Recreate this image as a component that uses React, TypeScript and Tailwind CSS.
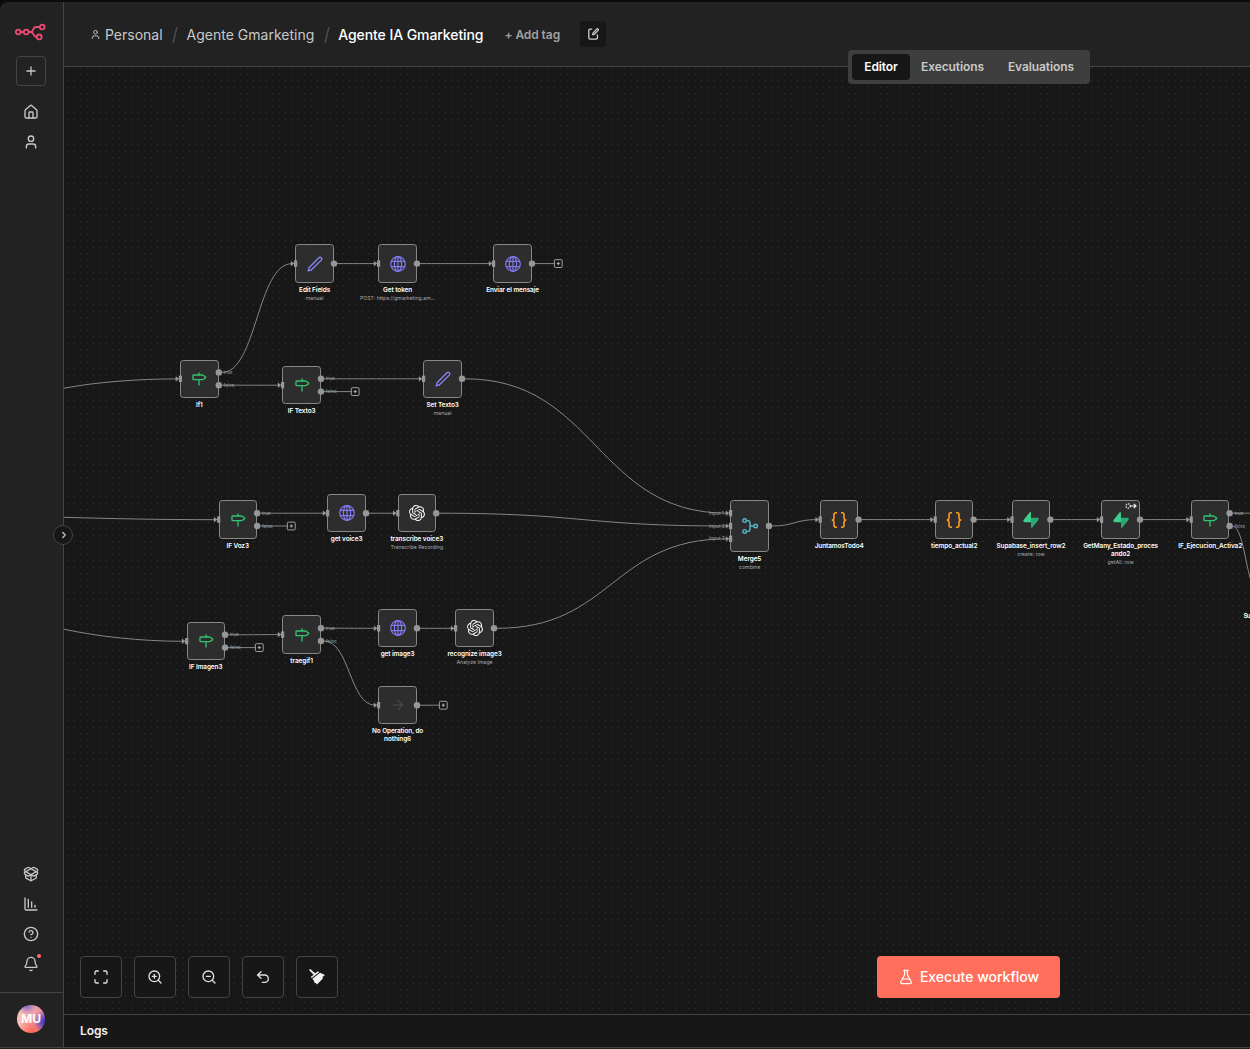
import type { ReactNode } from 'react';
import type { LucideIcon } from 'lucide-react';
import {
  ArrowRight,
  Bell,
  ChartColumnDecreasing,
  ChevronRight,
  CircleQuestionMark,
  FlaskConical,
  House,
  Maximize,
  Milestone,
  PackageOpen,
  Plus,
  Undo2,
  User,
  ZoomIn,
  ZoomOut
} from 'lucide-react';
import { SiOpenai } from 'react-icons/si';

type NodeKind = 'if' | 'edit' | 'http' | 'openai' | 'noop' | 'merge' | 'code' | 'supabase';

type FlowNode = {
  id: string;
  kind: NodeKind;
  x: number;
  y: number;
  lines: string[];
  subtitle?: string;
  retry?: boolean;
};

const SIZE = 38.4;

const nodes: FlowNode[] = [
  { id: 'edit', kind: 'edit', x: 295.4, y: 244.4, lines: ['Edit Fields'], subtitle: 'manual' },
  { id: 'token', kind: 'http', x: 378.4, y: 244.4, lines: ['Get token'], subtitle: 'POST: https://gmarketing.am...' },
  { id: 'enviar', kind: 'http', x: 493.4, y: 244.4, lines: ['Enviar el mensaje'] },
  { id: 'if1', kind: 'if', x: 180.2, y: 359.6, lines: ['If1'] },
  { id: 'texto', kind: 'if', x: 282.4, y: 366, lines: ['IF Texto3'] },
  { id: 'setTexto', kind: 'edit', x: 423.4, y: 359.6, lines: ['Set Texto3'], subtitle: 'manual' },
  { id: 'voz', kind: 'if', x: 218.5, y: 500.4, lines: ['IF Voz3'] },
  { id: 'getVoice', kind: 'http', x: 327.4, y: 494, lines: ['get voice3'] },
  { id: 'transcribe', kind: 'openai', x: 397.6, y: 494, lines: ['transcribe voice3'], subtitle: 'Transcribe Recording' },
  { id: 'imagen', kind: 'if', x: 186.5, y: 622, lines: ['IF Imagen3'] },
  { id: 'traegif', kind: 'if', x: 282.4, y: 615.4, lines: ['traegif1'] },
  { id: 'getImage', kind: 'http', x: 378.4, y: 609.1, lines: ['get image3'] },
  { id: 'recognize', kind: 'openai', x: 455.4, y: 609.1, lines: ['recognize image3'], subtitle: 'Analyze Image' },
  { id: 'noop', kind: 'noop', x: 378.4, y: 686, lines: ['No Operation, do', 'nothing6'] },
  { id: 'merge', kind: 'merge', x: 730.4, y: 500.4, lines: ['Merge5'], subtitle: 'combine' },
  { id: 'juntamos', kind: 'code', x: 820, y: 500.4, lines: ['JuntamosTodo4'] },
  { id: 'tiempo', kind: 'code', x: 935, y: 500.4, lines: ['tiempo_actual2'] },
  { id: 'insert', kind: 'supabase', x: 1011.8, y: 500.4, lines: ['Supabase_insert_row2'], subtitle: 'create: row' },
  {
    id: 'getMany',
    kind: 'supabase',
    x: 1101.4,
    y: 500.4,
    lines: ['GetMany_Estado_proces', 'ando2'],
    subtitle: 'getAll: row',
    retry: true
  },
  { id: 'ejecucion', kind: 'if', x: 1191, y: 500.4, lines: ['IF_Ejecucion_Activa2'] }
];

// [source, output index, target, input index]
const edges: [string, number, string, number][] = [
  ['if1', 0, 'edit', 0],
  ['if1', 1, 'texto', 0],
  ['edit', 0, 'token', 0],
  ['token', 0, 'enviar', 0],
  ['texto', 0, 'setTexto', 0],
  ['setTexto', 0, 'merge', 0],
  ['voz', 0, 'getVoice', 0],
  ['getVoice', 0, 'transcribe', 0],
  ['transcribe', 0, 'merge', 1],
  ['imagen', 0, 'traegif', 0],
  ['traegif', 0, 'getImage', 0],
  ['traegif', 1, 'noop', 0],
  ['getImage', 0, 'recognize', 0],
  ['recognize', 0, 'merge', 2],
  ['merge', 0, 'juntamos', 0],
  ['juntamos', 0, 'tiempo', 0],
  ['tiempo', 0, 'insert', 0],
  ['insert', 0, 'getMany', 0],
  ['getMany', 0, 'ejecucion', 0]
];

// Outputs without a connection end in a "+" button
const openOutputs: [string, number][] = [
  ['enviar', 0],
  ['texto', 1],
  ['voz', 1],
  ['imagen', 1],
  ['noop', 0]
];

// Edges whose other end lies outside the viewport
const loosePaths = [
  'M64 388.2C97 382 138 378.9 177 378.9',
  'M64 517.3C110 518.6 160 519.7 216 519.7',
  'M64 629.2C98 636.5 140 641.3 184 641.3',
  'M1232 513.2H1250',
  'M1232 526C1245.5 526 1246 590 1258 590'
];

const heightOf = (node: FlowNode) => (node.kind === 'merge' ? 51.2 : SIZE);

function outputsOf(node: FlowNode) {
  if (node.kind === 'if') return [node.y + 12.8, node.y + 25.6];
  return [node.y + heightOf(node) / 2];
}

function inputsOf(node: FlowNode) {
  if (node.kind === 'merge') return [node.y + 12.8, node.y + 25.6, node.y + 38.4];
  return [node.y + heightOf(node) / 2];
}

const findNode = (id: string) => nodes.find((node) => node.id === id) as FlowNode;

function edgePath([from, output, to, input]: [string, number, string, number]) {
  const source = findNode(from);
  const target = findNode(to);
  const sx = source.x + SIZE + 3.2;
  const sy = outputsOf(source)[output];
  const tx = target.x - 3.2;
  const ty = inputsOf(target)[input];
  const mid = (sx + tx) / 2;
  return `M${sx} ${sy}C${mid} ${sy} ${mid} ${ty} ${tx} ${ty}`;
}

function LogoIcon() {
  return (
    <svg width="31" height="18" viewBox="0 0 31 18" fill="none" stroke="#ea4b71" strokeWidth="1.8">
      <circle cx="3.2" cy="9" r="2.4" />
      <circle cx="11.2" cy="9" r="2.4" />
      <circle cx="27.2" cy="4" r="2.4" />
      <circle cx="24.2" cy="13.9" r="2.4" />
      <path d="M5.6 9h3.2M13.6 9H15.5c4 0 1.5-5 5.5-5h3.8M15.500 9c4 0 1.900 4.900 6.300 4.900" />
    </svg>
  );
}

function GlobeIcon() {
  return (
    <svg width="16" height="16" viewBox="0 0 16 16" fill="none" stroke="#8379f0" strokeWidth="1.2">
      <circle cx="8" cy="8" r="7.3" />
      <ellipse cx="8" cy="8" rx="3.6" ry="7.3" />
      <path d="M8 .7v14.6M1.3 5.3h13.4M1.3 10.7h13.4" />
    </svg>
  );
}

function PencilIcon() {
  return (
    <svg
      width="16"
      height="16"
      viewBox="0 0 16 16"
      fill="none"
      stroke="#8b87f5"
      strokeWidth="1.3"
      strokeLinejoin="round"
    >
      <path d="M1.2 14.8 2 11.8 11.9 1.7a1.65 1.65 0 0 1 2.4 2.4L4.2 14Z" />
    </svg>
  );
}

function MergeIcon() {
  return (
    <svg width="16" height="16" viewBox="0 0 16 16" fill="none" stroke="#54b8c9" strokeWidth="1.4">
      <circle cx="2.6" cy="2.6" r="1.8" />
      <circle cx="2.6" cy="13.4" r="1.8" />
      <circle cx="13.6" cy="8" r="1.8" />
      <path d="M4.5 2.6h1.3c1.5 0 2.2.8 2.2 2.2v6.4c0 1.4-.7 2.2-2.2 2.2H4.5M8 8h3.7" />
    </svg>
  );
}

function BracesIcon() {
  return (
    <svg width="16" height="16" viewBox="0 0 16 16" fill="none" stroke="#ff9922" strokeWidth="1.6">
      <path d="M6 .8H4.900c-1.300 0-1.900.7-1.900 1.900v3c0 1.300-.7 2.300-2.300 2.300 1.600 0 2.300 1 2.300 2.300v3c0 1.200.6 1.900 1.900 1.900H6M10 .8h1.100c1.300 0 1.900.7 1.900 1.900v3c0 1.300.7 2.300 2.300 2.300-1.600 0-2.300 1-2.300 2.300v3c0 1.200-.6 1.900-1.900 1.900H10" />
    </svg>
  );
}

function SupabaseIcon() {
  return (
    <svg width="16" height="16" viewBox="0 0 109 113" fill="none">
      <path
        d="M63.7 110.3c-2.9 3.6-8.7 1.6-8.7-3L54 40.1h45.2c8.2 0 12.8 9.4 7.7 15.8L63.7 110.3Z"
        fill="#2ca873"
      />
      <path
        d="M45.3 2.1c2.9-3.6 8.7-1.6 8.7 3l.5 67.2H9.8c-8.2 0-12.7-9.5-7.6-15.9L45.3 2.1Z"
        fill="#3ecf8e"
      />
    </svg>
  );
}

function BroomIcon() {
  return (
    <svg width="18" height="18" viewBox="0 0 18 18" fill="#f0f0f0">
      <path d="M1 2.1 2.2.9 7.2 5.2 9.900 3.300l1.300.9L3.600 10 2.700 8.900 5.600 6.800Z" />
      <path d="M12.100 4.700 17 7.100 14.600 9 14.700 10.800 9 16.600 7.700 15 6.200 14.600 6 12.800 4.300 10.700Z" />
    </svg>
  );
}

function NoteIcon() {
  return (
    <svg
      width="11"
      height="12"
      viewBox="0 0 12 13"
      fill="none"
      stroke="#d0d0d0"
      strokeWidth="1.4"
      strokeLinecap="round"
      strokeLinejoin="round"
    >
      <path d="M4 1.2H2.3c-.8 0-1.4.6-1.4 1.4v8c0 .8.6 1.4 1.4 1.4h6.6c.8 0 1.4-.6 1.4-1.4V7.5" />
      <path d="M5 7.2 5.4 5.5 9.5 1.2a1 1 0 0 1 1.5 1.4L6.900 6.800Z" />
    </svg>
  );
}

function RetryIcon() {
  return (
    <svg width="12" height="6" viewBox="0 0 12 6" fill="none" stroke="#f2f2f2" strokeWidth="1.2">
      <circle cx="3.2" cy="3" r="2.2" strokeDasharray="1.4 0.9" />
      <path d="M5.8 3h5M8.8.8 11 3 8.8 5.2" />
    </svg>
  );
}

const nodeIcons: Record<NodeKind, ReactNode> = {
  if: <Milestone size={16} color="#31c46f" />,
  edit: <PencilIcon />,
  http: <GlobeIcon />,
  openai: <SiOpenai size={16} color="#f4f4f4" />,
  noop: <ArrowRight size={16} color="#4a4a4a" strokeWidth={1.7} />,
  merge: <MergeIcon />,
  code: <BracesIcon />,
  supabase: <SupabaseIcon />
};

function CanvasNode({ node }: { node: FlowNode }) {
  return (
    <div
      className="absolute flex w-[38.4px] flex-col items-center"
      style={{ left: node.x, top: node.y }}
    >
      <div
        className="relative flex w-full shrink-0 items-center justify-center rounded-[3.2px] border border-[#888] bg-[#2d2d2d]"
        style={{ height: heightOf(node) }}
      >
        {nodeIcons[node.kind]}
        {node.retry && (
          <span className="absolute top-[2px] right-[2px]">
            <RetryIcon />
          </span>
        )}
      </div>
      <div className="mt-[3px] text-center text-[6.4px] leading-[8px] font-semibold tracking-[-0.07px] whitespace-nowrap text-white">
        {node.lines.map((line) => (
          <div key={line}>{line}</div>
        ))}
      </div>
      {node.subtitle && (
        <div className="mt-[1px] text-[5.2px] leading-[7px] whitespace-nowrap text-[#a8a8a8]">{node.subtitle}</div>
      )}
    </div>
  );
}

function Connections() {
  return (
    <svg className="absolute top-0 left-0" width="1250" height="1049" fill="none">
      <defs>
        <pattern id="dots" x="90.3" y="762.3" width="6.4" height="6.4" patternUnits="userSpaceOnUse">
          <circle cx="3.2" cy="3.2" r="0.4" fill="#5c5c5c" />
        </pattern>
      </defs>
      <rect width="1250" height="1049" fill="url(#dots)" />
      <g stroke="#868686" strokeWidth="1">
        {edges.map((edge) => (
          <path key={edge.join()} d={edgePath(edge)} />
        ))}
        {loosePaths.map((d) => (
          <path key={d} d={d} />
        ))}
        {openOutputs.map(([id, index]) => {
          const node = findNode(id);
          const y = outputsOf(node)[index];
          const cx = node.x + SIZE + (node.kind === 'if' ? 34.4 : 26.5);
          return (
            <g key={id}>
              <path d={`M${node.x + SIZE + 3} ${y}H${cx - 4}`} />
              <rect x={cx - 3.9} y={y - 3.9} width="7.8" height="7.8" rx="1" fill="#171717" stroke="#a0a0a0" />
              <path d={`M${cx - 1.6} ${y}h3.2M${cx} ${y - 1.6}v3.2`} stroke="#b0b0b0" />
            </g>
          );
        })}
      </g>
    </svg>
  );
}

function Handles() {
  return (
    <svg className="absolute top-0 left-0" width="1250" height="1049" fill="#979797">
      {nodes.map((node) => (
        <g key={node.id}>
          {inputsOf(node).map((y) => (
            <g key={y}>
              <rect x={node.x - 1.4} y={y - 3.2} width="3.2" height="6.4" />
              <path d={`M${node.x - 4.6} ${y - 2.6}L${node.x - 1} ${y}L${node.x - 4.6} ${y + 2.6}Z`} />
            </g>
          ))}
          {outputsOf(node).map((y) => (
            <circle key={y} cx={node.x + SIZE + 0.2} cy={y} r="3.2" />
          ))}
        </g>
      ))}
    </svg>
  );
}

function HandleLabels() {
  return (
    <>
      {nodes
        .filter((node) => node.kind === 'if')
        .map((node) => (
          <div
            key={node.id}
            className="absolute text-[4.8px] leading-[12.8px] text-[#9a9a9a]"
            style={{ left: node.x + SIZE + 5, top: node.y + 6.4 }}
          >
            <div>true</div>
            <div>false</div>
          </div>
        ))}
      <div className="absolute top-[506.8px] left-[709px] text-[4.8px] leading-[12.8px] text-[#9a9a9a]">
        <div>Input 1</div>
        <div>Input 2</div>
        <div>Input 3</div>
      </div>
      <div className="absolute top-[612px] left-[1243.5px] text-[6.4px] leading-[8px] font-semibold tracking-[-0.8px] text-white">
        Su
      </div>
    </>
  );
}

const lowerLinks: { icon: LucideIcon; label: string; alert?: boolean }[] = [
  { icon: PackageOpen, label: 'Templates' },
  { icon: ChartColumnDecreasing, label: 'Insights' },
  { icon: CircleQuestionMark, label: 'Help' },
  { icon: Bell, label: "What's New", alert: true }
];

function Sidebar() {
  return (
    <aside className="relative z-20 flex w-16 shrink-0 flex-col rounded-tl-lg border-r border-[#444] bg-[#222] text-[#c8c8c8]">
      <div className="flex flex-col items-center pt-[21px] pr-[1px]">
        <span className="-ml-[2px]">
          <LogoIcon />
        </span>
        <button className="mt-[15px] flex size-[30px] items-center justify-center rounded-[4px] border border-[#444]">
          <Plus size={14} strokeWidth={2.2} />
        </button>
        <House size={16} strokeWidth={2} className="mt-[18px]" />
        <User size={16} strokeWidth={2} className="mt-[14px]" />
      </div>
      <div className="mt-auto flex flex-col items-center gap-[14px] pr-[1px] pb-[20px]">
        {lowerLinks.map((link) => (
          <span key={link.label} className="relative" aria-label={link.label}>
            <link.icon size={16} strokeWidth={2} />
            {link.alert && <span className="absolute -top-[2px] -right-[2px] size-[4px] rounded-full bg-[#ff6b6b]" />}
          </span>
        ))}
      </div>
      <div className="flex h-[55px] shrink-0 justify-center border-t border-[#444] pt-[12px] pr-[1px]">
        <div className="flex size-7 items-center justify-center rounded-full bg-[radial-gradient(circle_at_35%_0%,#7a62c8_0%,transparent_28%),radial-gradient(circle_at_100%_60%,#5140c8_8%,transparent_36%),radial-gradient(circle_at_55%_100%,#ff6b5c_8%,transparent_50%),linear-gradient(90deg,#fbc4bb,#e58aa0)] text-[12px] font-bold text-white">
          MU
        </div>
      </div>
      <button className="absolute top-[523px] left-[53px] flex size-5 items-center justify-center rounded-full border border-[#444] bg-[#171717] pl-[1px]">
        <ChevronRight size={10} strokeWidth={3} />
      </button>
    </aside>
  );
}

function Header() {
  return (
    <header className="flex h-[65px] shrink-0 items-center border-b border-[#444] bg-[#222] pt-px pl-[26px] text-[14px] text-[#c8c8c8]">
      <User size={11} strokeWidth={2} />
      <span className="ml-1">Personal</span>
      <svg className="mx-[8px]" width="8" height="18" stroke="#4d4d4d" strokeWidth="1.4">
        <path d="M6 1 2 17" />
      </svg>
      <span>Agente Gmarketing</span>
      <svg className="mr-[7px] ml-[9px]" width="8" height="18" stroke="#4d4d4d" strokeWidth="1.4">
        <path d="M6 1 2 17" />
      </svg>
      <span className="font-medium tracking-[-0.08px] text-white">Agente IA Gmarketing</span>
      <span className="ml-[21px] text-xs font-semibold tracking-[-0.08px] text-[#a0a0a0]">+ Add tag</span>
      <button className="mb-px ml-[20px] flex size-[26px] items-center justify-center rounded-[4px] bg-[#171717]">
        <NoteIcon />
      </button>
    </header>
  );
}

function ViewTabs() {
  return (
    <div className="absolute top-[48px] left-[784px] z-10 flex h-[34px] w-[242px] items-center rounded-[4px] bg-[#3e3e3e] p-1 text-xs font-semibold tracking-[-0.1px] text-[#c8c8c8]">
      <span className="flex h-[26px] w-[58px] items-center justify-center rounded-[4px] bg-[#171717] text-white">
        Editor
      </span>
      <span className="ml-[11px]">Executions</span>
      <span className="ml-[24px]">Evaluations</span>
    </div>
  );
}

const controls: { label: string; icon: ReactNode }[] = [
  { label: 'Fit view', icon: <Maximize size={16} /> },
  { label: 'Zoom in', icon: <ZoomIn size={16} /> },
  { label: 'Zoom out', icon: <ZoomOut size={16} /> },
  { label: 'Undo', icon: <Undo2 size={16} /> },
  { label: 'Tidy up', icon: <BroomIcon /> }
];

function Canvas() {
  return (
    <section className="relative flex min-h-0 flex-1 items-end overflow-hidden">
      <div className="absolute -top-[67px] -left-[64px] h-[1049px] w-[1250px]">
        <Connections />
        {nodes.map((node) => (
          <CanvasNode key={node.id} node={node} />
        ))}
        <Handles />
        <HandleLabels />
      </div>
      <div className="relative flex gap-3 pb-4 pl-4 text-[#e0e0e0]">
        {controls.map((control) => (
          <button
            key={control.label}
            aria-label={control.label}
            className="flex size-[42px] items-center justify-center rounded-[4px] border border-[#444] bg-[#171717]"
          >
            {control.icon}
          </button>
        ))}
      </div>
      <button className="relative mb-4 ml-[539px] flex h-[42px] w-[183px] items-center justify-center gap-[6px] rounded-[4px] bg-[#ff6f5c] text-[14px] font-medium text-white">
        <FlaskConical size={16} strokeWidth={1.8} />
        <span className="pb-[2px]">Execute workflow</span>
      </button>
    </section>
  );
}

export default function App() {
  return (
    <div className="flex h-[1049px] w-[1250px] flex-col overflow-hidden bg-[#0b0b0b] pt-[2px] font-['Inter',sans-serif]">
      <div className="flex min-h-0 flex-1">
        <Sidebar />
        <main className="relative flex min-w-0 flex-1 flex-col bg-[#171717]">
          <Header />
          <ViewTabs />
          <Canvas />
          <footer className="flex h-[33px] shrink-0 items-center border-t border-[#444] pl-4 text-xs font-semibold tracking-[-0.1px] text-[#f0f0f0]">
            Logs
          </footer>
        </main>
      </div>
      <div className="h-[2px] shrink-0 border-t border-[#3b443f] bg-[#16251c]" />
    </div>
  );
}
